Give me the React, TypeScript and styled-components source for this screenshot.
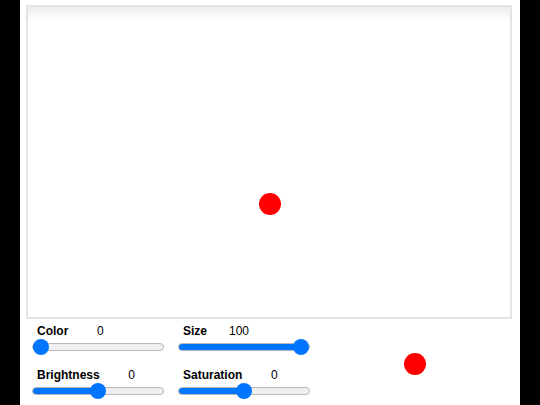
import React, { useState } from "react";
import styled, { createGlobalStyle } from "styled-components";

const Global = createGlobalStyle`
  html, body {
    margin: 0;
    padding: 0;
    background: #000;
  }
  body {
    font-family: "Liberation Sans", Arial, sans-serif;
  }
`;

const Page = styled.div`
  width: 500px;
  height: 405px;
  margin: 0 auto;
  background: #fff;
  display: flex;
  flex-direction: column;
  padding-top: 5px;
  box-sizing: border-box;
`;

const Stage = styled.div`
  width: 486px;
  height: 314px;
  margin-left: 6px;
  box-sizing: border-box;
  border: 2px solid #e4e4e4;
  background: linear-gradient(#ececec 0px, #f6f6f6 6px, #fff 14px);
  position: relative;
`;

const Dot = styled.div<{ $size: number; $color: string }>`
  width: ${(p) => p.$size}px;
  height: ${(p) => p.$size}px;
  border-radius: 50%;
  background: ${(p) => p.$color};
`;

const StageDot = styled(Dot)`
  position: absolute;
  transform: translate(-50%, -50%);
`;

const Bottom = styled.div`
  display: flex;
  flex: 1;
`;

const Controls = styled.div`
  display: grid;
  grid-template-columns: 132px 132px;
  column-gap: 14px;
  row-gap: 13px;
  padding: 5px 0 0 12px;
  align-content: start;
`;

const Control = styled.div`
  display: flex;
  flex-direction: column;
  gap: 1px;
`;

const Head = styled.div`
  display: flex;
  align-items: baseline;
  padding-left: 5px;
  font-size: 12px;
  line-height: 14px;
  color: #000;
`;

const Label = styled.span`
  font-weight: bold;
`;

const Value = styled.span`
  width: 32px;
  margin-left: 16px;
  text-align: center;
`;

const Slider = styled.input`
  -webkit-appearance: none;
  appearance: none;
  width: 132px;
  height: 16px;
  margin: 0;
  background: transparent;
  outline: none;

  &::-webkit-slider-runnable-track {
    height: 8px;
    box-sizing: border-box;
    border-radius: 4px;
    border: 1px solid #b8b8b8;
    background: var(--track);
  }

  &::-webkit-slider-thumb {
    -webkit-appearance: none;
    appearance: none;
    width: 16px;
    height: 16px;
    margin-top: -5px;
    border-radius: 50%;
    background: #0075ff;
    border: none;
  }
`;

type Setting = { key: string; label: string; min: number; max: number };

const settings: Setting[] = [
  { key: "color", label: "Color", min: 0, max: 360 },
  { key: "size", label: "Size", min: 0, max: 100 },
  { key: "brightness", label: "Brightness", min: -100, max: 100 },
  { key: "saturation", label: "Saturation", min: -100, max: 100 },
];

const Preview = styled.div`
  flex: 1;
  display: flex;
  align-items: flex-start;
  justify-content: center;
  padding-top: 34px;
`;

function trackFill(v: number, min: number, max: number) {
  // fill runs up to the thumb centre: 8px + fraction of the 116px travel
  const px = 8 + ((v - min) / (max - min)) * 116;
  return `linear-gradient(to right, #0075ff 0, #0075ff ${px}px, #efefef ${px}px, #efefef 100%)`;
}

export default function App() {
  const [vals, setVals] = useState<Record<string, number>>({
    color: 0,
    size: 100,
    brightness: 0,
    saturation: 0,
  });

  return (
    <>
      <Global />
      <Page>
        <Stage>
          <StageDot $size={22} $color="#ff0000" style={{ left: 242, top: 197 }} />
        </Stage>
        <Bottom>
          <Controls>
            {settings.map((s) => (
              <Control key={s.key}>
                <Head>
                  <Label>{s.label}</Label>
                  <Value>{vals[s.key]}</Value>
                </Head>
                <Slider
                  type="range"
                  min={s.min}
                  max={s.max}
                  value={vals[s.key]}
                  style={{ ["--track" as string]: trackFill(vals[s.key], s.min, s.max) }}
                  onChange={(e) =>
                    setVals({ ...vals, [s.key]: Number(e.target.value) })
                  }
                />
              </Control>
            ))}
          </Controls>
          <Preview>
            <Dot $size={22} $color="#ff0000" />
          </Preview>
        </Bottom>
      </Page>
    </>
  );
}
